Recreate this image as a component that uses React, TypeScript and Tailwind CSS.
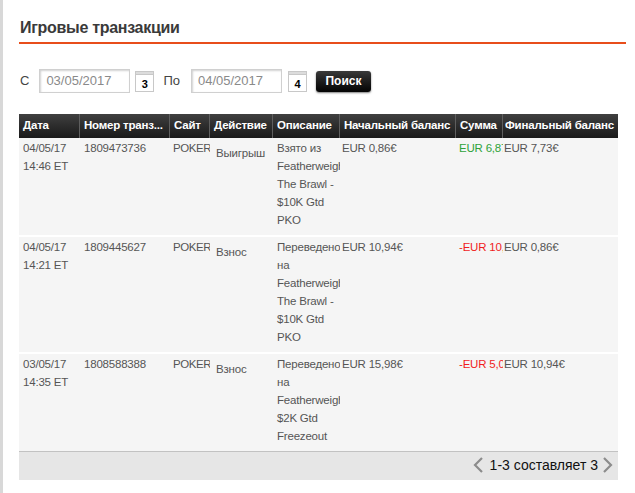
import React from "react";

const font = { fontFamily: "'Liberation Sans', Arial, sans-serif" };

type Row = {
  date: string;
  num: string;
  site: string;
  action: string;
  desc: string;
  start: string;
  amount: string;
  positive: boolean;
  end: string;
};

const rows: Row[] = [
  {
    date: "04/05/17 14:46 ET",
    num: "1809473736",
    site: "POKER",
    action: "Выигрыш",
    desc: "Взято из Featherweight The Brawl - $10K Gtd PKO",
    start: "EUR 0,86€",
    amount: "EUR 6,87€",
    positive: true,
    end: "EUR 7,73€",
  },
  {
    date: "04/05/17 14:21 ET",
    num: "1809445627",
    site: "POKER",
    action: "Взнос",
    desc: "Переведено на Featherweight The Brawl - $10K Gtd PKO",
    start: "EUR 10,94€",
    amount: "-EUR 10,08€",
    positive: false,
    end: "EUR 0,86€",
  },
  {
    date: "03/05/17 14:35 ET",
    num: "1808588388",
    site: "POKER",
    action: "Взнос",
    desc: "Переведено на Featherweight $2K Gtd Freezeout",
    start: "EUR 15,98€",
    amount: "-EUR 5,04€",
    positive: false,
    end: "EUR 10,94€",
  },
];

function CalIcon({ n }: { n: string }) {
  return (
    <div className="w-[19px] h-[21px] border border-[#c8c8c8] bg-white flex flex-col">
      <div className="h-[3px] bg-[#dcdcdc] border-b border-[#c8c8c8]" />
      <div className="flex-1 flex items-end justify-center pb-[1px] text-[11px] leading-none font-bold text-black">
        {n}
      </div>
    </div>
  );
}

function DateInput({ v }: { v: string }) {
  return (
    <div className="w-[91px] h-[24px] border border-[#d0d0d0] bg-white shadow-[inset_1px_1px_2px_rgba(0,0,0,0.18)] flex items-center pl-[6px] text-[13px] text-[#8a8a8a]">
      {v}
    </div>
  );
}

const cols = "grid grid-cols-[61px_90px_40px_63px_67px_116px_47px_115px]";

export default function App() {
  return (
    <div
      className="w-[635px] h-[493px] bg-white border-l-[3px] border-[#d8d8d8] overflow-hidden"
      style={font}
    >
      <div className="ml-[16px] w-[607px]">
        <div className="h-[42px] pt-[18px]">
          <div className="text-[16px] leading-[20px] font-bold tracking-[-0.3px] text-[#3a3a3a] pl-[1px]">
            Игровые транзакции
          </div>
        </div>
        <div className="h-[2px] bg-[#e84e1b]" />

        <div className="mt-[25px] flex items-center h-[24px] text-[13px] text-[#444]">
          <span className="ml-[1px]">С</span>
          <div className="ml-[10px]">
            <DateInput v="03/05/2017" />
          </div>
          <div className="ml-[5px]">
            <CalIcon n="3" />
          </div>
          <span className="ml-[9px]">По</span>
          <div className="ml-[11px]">
            <DateInput v="04/05/2017" />
          </div>
          <div className="ml-[6px]">
            <CalIcon n="4" />
          </div>
          <button className="ml-[9px] w-[55px] h-[21px] rounded-[3px] bg-linear-to-b from-[#3a3a3a] to-[#050505] text-white text-[12px] font-bold shadow-[0_1px_2px_rgba(0,0,0,0.5)] flex items-center justify-center">
            Поиск
          </button>
        </div>

        <div className="mt-[21px] w-[599px]">
          <div
            className={`${cols} h-[24px] bg-linear-to-b from-[#404040] to-[#1a1a1a] text-white text-[11.5px] tracking-[-0.2px] font-bold`}
          >
            {[
              "Дата",
              "Номер транз...",
              "Сайт",
              "Действие",
              "Описание",
              "Начальный баланс",
              "Сумма",
              "Финальный баланс",
            ].map((h, i) => (
              <div
                key={h}
                className={`flex items-center whitespace-nowrap overflow-hidden ${
                  i < 7 ? "border-r border-[#5e5e5e]" : ""
                } ${i === 7 ? "pl-[2px]" : "pl-[4px]"}`}
              >
                {h}
              </div>
            ))}
          </div>

          {rows.map((r) => (
            <div
              key={r.num}
              className={`${cols} bg-[#f5f5f5] border-b-2 border-white text-[11.5px] tracking-[-0.2px] leading-[18px] text-[#555] pt-[1px] pb-[6px]`}
            >
              <div className="pl-[4px] overflow-hidden">{r.date}</div>
              <div className="pl-[4px] overflow-hidden">{r.num}</div>
              <div className="pl-[3px] overflow-hidden tracking-[-0.4px]">{r.site}</div>
              <div className="pl-[6px] pt-[5px] overflow-hidden">{r.action}</div>
              <div className="pl-[4px] overflow-hidden">{r.desc}</div>
              <div className="pl-[2px] overflow-hidden whitespace-nowrap">{r.start}</div>
              <div
                className={`pl-[3px] overflow-hidden whitespace-nowrap ${
                  r.positive ? "text-[#2ea33a]" : "text-[#f01d1d]"
                }`}
              >
                {r.amount}
              </div>
              <div className="pl-[1px] overflow-hidden whitespace-nowrap">{r.end}</div>
            </div>
          ))}

          <div className="-mt-[2px] h-[29px] bg-[#e6e6e6] border-t border-[#c2c2c2] flex items-start justify-end pt-[4px] pr-[5px] text-[14px] text-[#111]">
            <svg width="11" height="16" viewBox="0 0 11 16" className="mt-[1px] mr-[6px]">
              <polyline points="9,1 2,8 9,15" fill="none" stroke="#8c8c8c" strokeWidth="2.2" />
            </svg>
            <span className="leading-[18px]">1-3 составляет 3</span>
            <svg width="11" height="16" viewBox="0 0 11 16" className="mt-[1px] ml-[4px]">
              <polyline points="2,1 9,8 2,15" fill="none" stroke="#8c8c8c" strokeWidth="2.2" />
            </svg>
          </div>
        </div>
      </div>
    </div>
  );
}
